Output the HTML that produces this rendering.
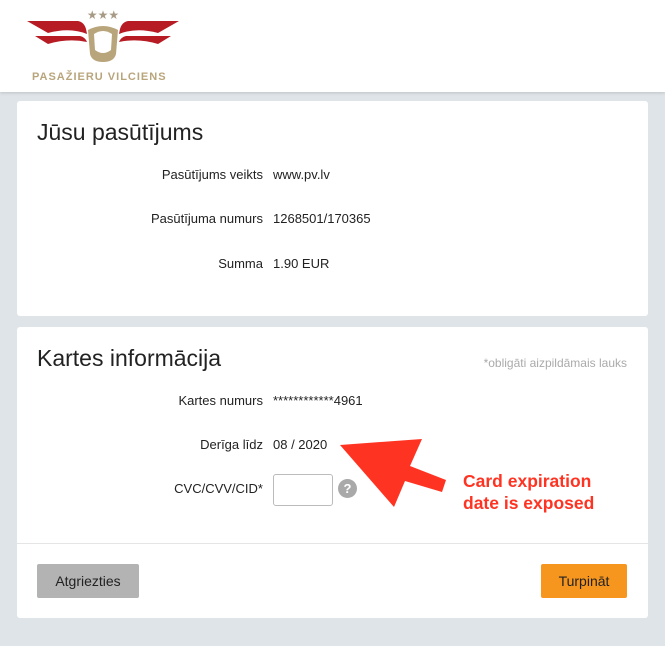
<!DOCTYPE html><html><head><style>
body{margin:0;width:665px;height:646px;background:#dfe4e8;font-family:"Liberation Sans",sans-serif;position:relative;overflow:hidden;color:#222}
.hdr{position:absolute;left:0;top:0;width:665px;height:92px;background:#fff;box-shadow:0 1px 3px rgba(0,0,0,.15)}
.card{position:absolute;left:17px;width:631px;background:#fff;border-radius:3px}
h2{position:absolute;left:20px;margin:0;font-weight:normal;font-size:23px;color:#222}
.l{position:absolute;width:246px;text-align:right;font-size:13px;left:0}
.v{position:absolute;left:256px;font-size:13px}
.btn{position:absolute;font-size:14px;text-align:center;border-radius:2px}
</style></head><body>
<div class="hdr">
<svg width="170" height="90" style="position:absolute;left:20px;top:0">
<g fill="#b71c24">
<path d="M7 21 H58 Q64 22 66 29 L67 34 Q50 27 28 33 Z"/>
<path d="M15 36 H60 Q65 37 67 42 Q48 38 28 44 Z"/>
<path d="M159 21 H108 Q102 22 100 29 L99 34 Q116 27 138 33 Z"/>
<path d="M151 36 H106 Q101 37 99 42 Q118 38 138 44 Z"/>
</g>
<g fill="#b9a57c">
<path d="M68 30 Q83 22 98 30 L96 54 Q94 62 83 62 Q72 62 70 54 Z"/>
<text x="83" y="19" font-size="12" text-anchor="middle" fill="#a89b85">★★★</text>
<text x="12" y="80" font-size="11" font-weight="bold" letter-spacing="1" fill="#b9a57c" font-family="Liberation Sans">PASAŽIERU VILCIENS</text>
</g>
<path d="M74 34 Q83 28 92 34 L91 50 Q83 56 75 50 Z" fill="#fff"/>
</svg>
</div>
<div class="card" style="top:101px;height:215px">
<h2 style="top:18px">Jūsu pasūtījums</h2>
<div class="l" style="top:66px">Pasūtījums veikts</div><div class="v" style="top:66px">www.pv.lv</div>
<div class="l" style="top:110px">Pasūtījuma numurs</div><div class="v" style="top:110px">1268501/170365</div>
<div class="l" style="top:155px">Summa</div><div class="v" style="top:155px">1.90 EUR</div>
</div>
<div class="card" style="top:327px;height:291px">
<h2 style="top:18px">Kartes informācija</h2>
<div style="position:absolute;right:21px;top:29px;font-size:12px;color:#aaa">*obligāti aizpildāmais lauks</div>
<div class="l" style="top:66px">Kartes numurs</div><div class="v" style="top:66px">************4961</div>
<div class="l" style="top:110px">Derīga līdz</div><div class="v" style="top:110px">08 / 2020</div>
<div class="l" style="top:154px">CVC/CVV/CID*</div>
<div style="position:absolute;left:256px;top:147px;width:58px;height:30px;border:1px solid #bbb;border-radius:3px"></div>
<div style="position:absolute;left:321px;top:152px;width:19px;height:19px;border-radius:50%;background:#a9a9a9;color:#fff;font-size:13px;font-weight:bold;text-align:center;line-height:19px">?</div>
<div style="position:absolute;left:0;top:216px;width:631px;border-top:1px solid #e5e5e5"></div>
<div class="btn" style="left:20px;top:237px;width:102px;height:34px;line-height:34px;background:#b3b3b3;color:#222">Atgriezties</div>
<div class="btn" style="left:524px;top:237px;width:86px;height:34px;line-height:34px;background:#f7961e;color:#222">Turpināt</div>
</div>
<svg width="665" height="646" style="position:absolute;left:0;top:0">
<path d="M340 445 L422 439 L410 466 L446 480 L442 492 L405 481 L394 507 Z" fill="#ff3322"/>
<text x="463" y="487" font-size="17.5" font-weight="bold" fill="#ff3322" font-family="Liberation Sans">Card expiration</text>
<text x="463" y="509" font-size="17.5" font-weight="bold" fill="#ff3322" font-family="Liberation Sans">date is exposed</text>
</svg>
</body></html>
